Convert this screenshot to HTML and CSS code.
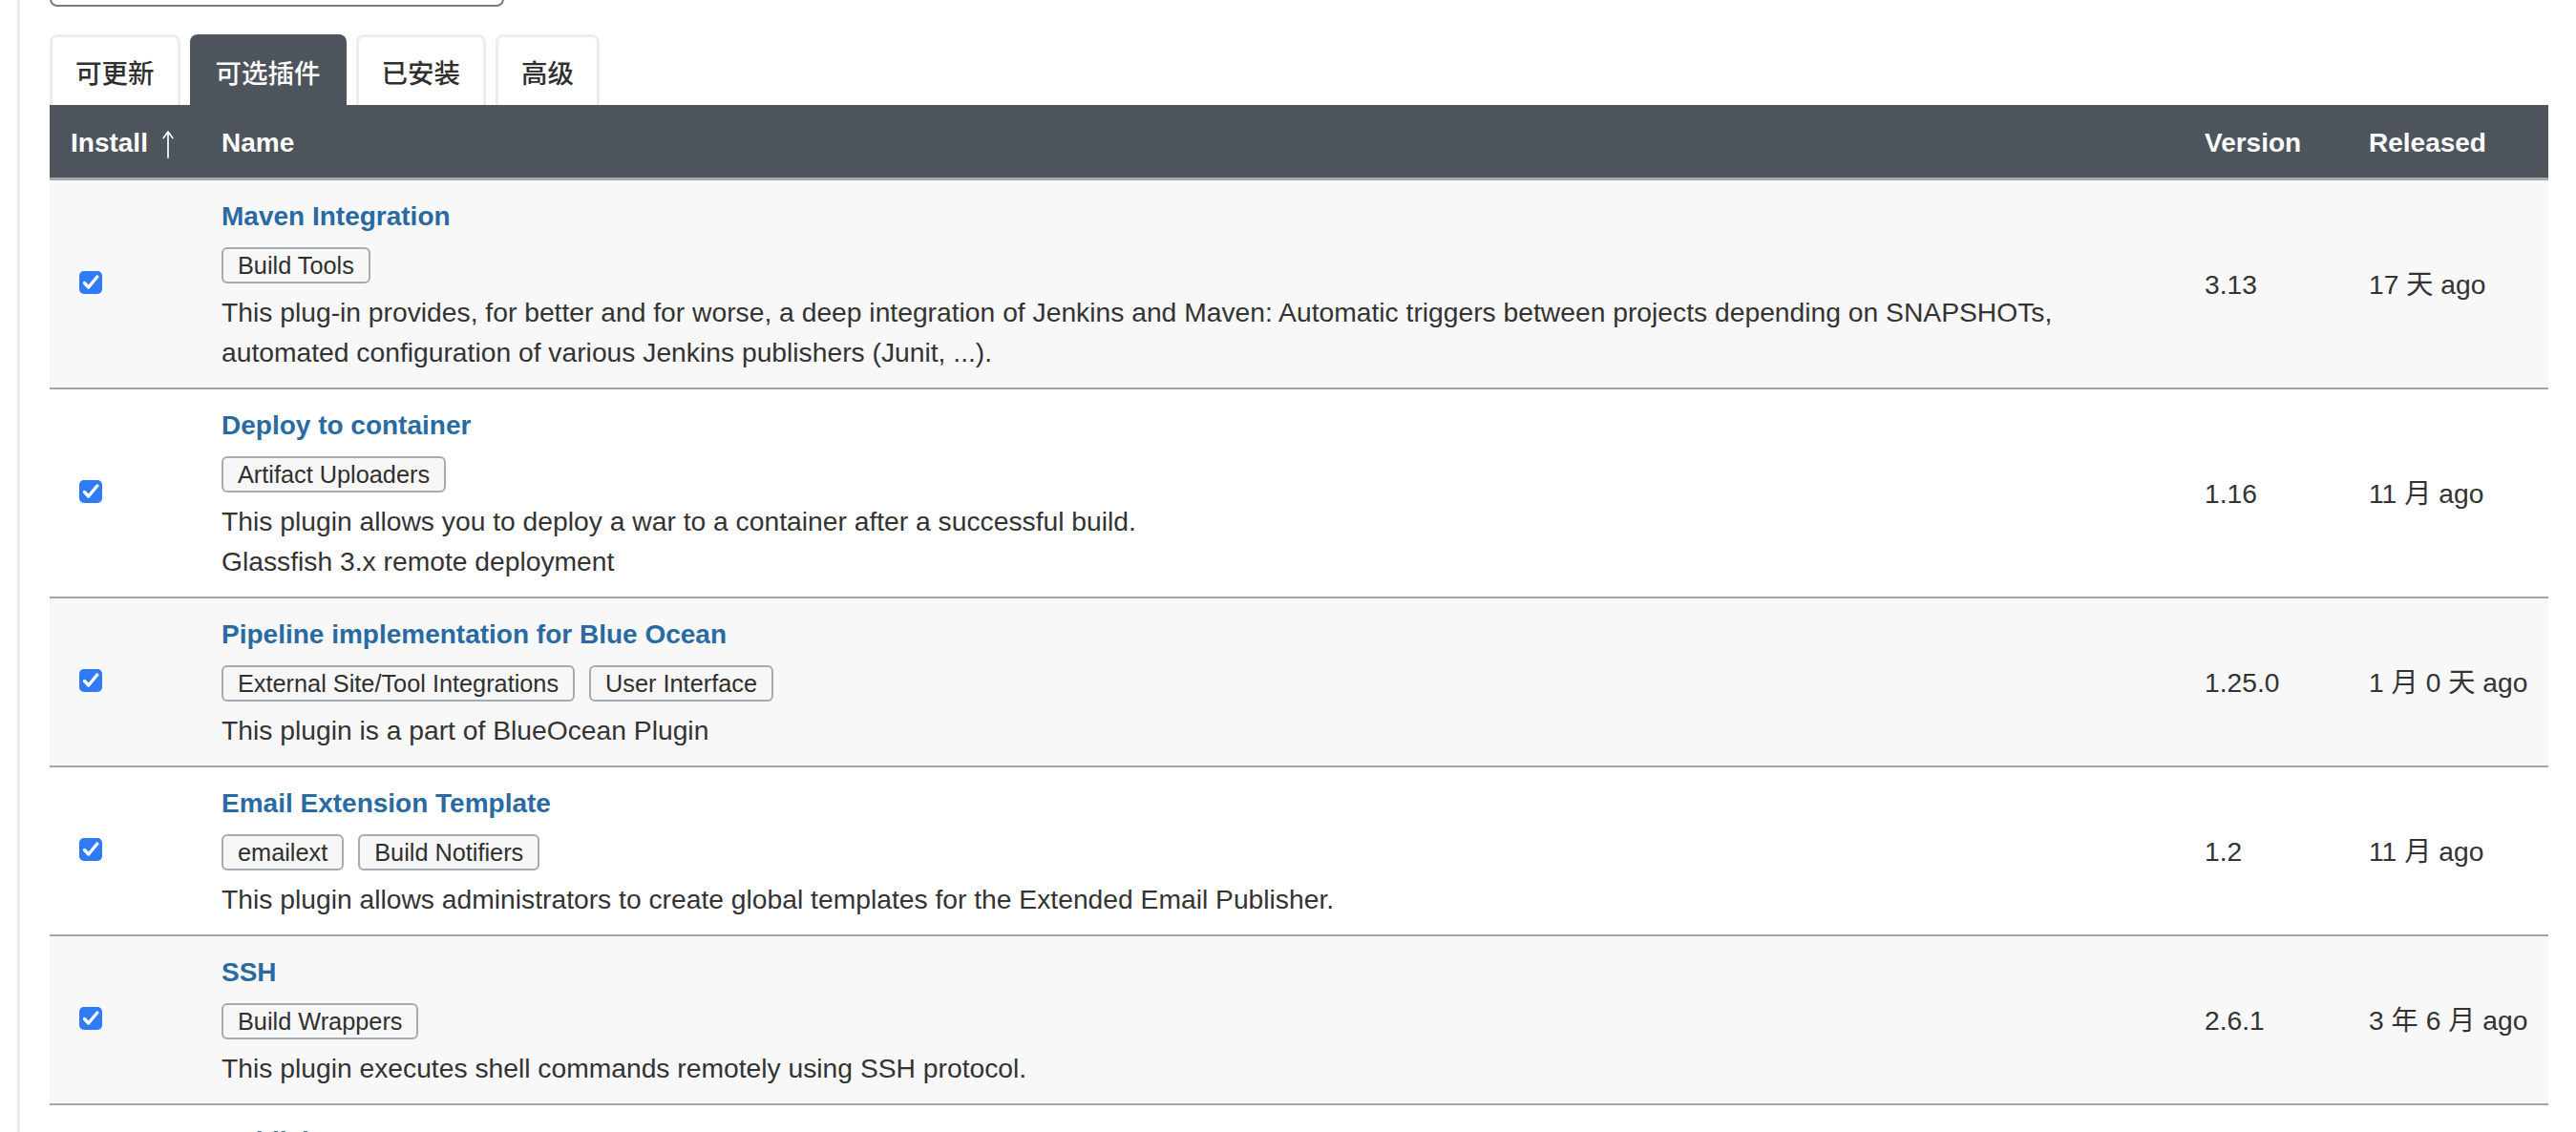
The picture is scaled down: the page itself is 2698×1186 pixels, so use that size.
FILE: index.html
```html
<!DOCTYPE html>
<html lang="zh-CN">
<head>
<meta charset="utf-8">
<title>插件管理</title>
<link rel="stylesheet" href="styles.css">
</head>
<body>
<div class="page">
  <div class="rail"></div>
  <main class="main">
    <div class="search"></div>
    <nav class="tabs">
      <a class="tab">可更新</a>
      <a class="tab active">可选插件</a>
      <a class="tab">已安装</a>
      <a class="tab">高级</a>
    </nav>
    <table class="plugins">
      <colgroup>
        <col class="c-install">
        <col class="c-name">
        <col class="c-version">
        <col class="c-released">
      </colgroup>
      <thead>
        <tr>
          <th>Install<svg class="arrow" viewBox="0 0 12 30"><path d="M6 29V2M1.2 8.5L6 2l4.8 6.5"/></svg></th>
          <th>Name</th>
          <th>Version</th>
          <th>Released</th>
        </tr>
      </thead>
      <tbody>
        <tr class="shade">
          <td class="cb"><span class="check"><svg viewBox="0 0 24 24"><path d="M5.5 12.5l4.2 4.5L18.8 6"/></svg></span></td>
          <td class="info">
            <a class="name">Maven Integration</a>
            <div class="tags"><span class="tag">Build Tools</span></div>
            <div class="desc">This plug-in provides, for better and for worse, a deep integration of Jenkins and Maven: Automatic triggers between projects depending on SNAPSHOTs, automated configuration of various Jenkins publishers (Junit, ...).</div>
          </td>
          <td class="meta">3.13</td>
          <td class="meta">17 天 ago</td>
        </tr>
        <tr>
          <td class="cb"><span class="check"><svg viewBox="0 0 24 24"><path d="M5.5 12.5l4.2 4.5L18.8 6"/></svg></span></td>
          <td class="info">
            <a class="name">Deploy to container</a>
            <div class="tags"><span class="tag">Artifact Uploaders</span></div>
            <div class="desc">This plugin allows you to deploy a war to a container after a successful build.<br>Glassfish 3.x remote deployment</div>
          </td>
          <td class="meta">1.16</td>
          <td class="meta">11 月 ago</td>
        </tr>
        <tr class="shade">
          <td class="cb"><span class="check"><svg viewBox="0 0 24 24"><path d="M5.5 12.5l4.2 4.5L18.8 6"/></svg></span></td>
          <td class="info">
            <a class="name">Pipeline implementation for Blue Ocean</a>
            <div class="tags"><span class="tag">External Site/Tool Integrations</span><span class="tag">User Interface</span></div>
            <div class="desc">This plugin is a part of BlueOcean Plugin</div>
          </td>
          <td class="meta">1.25.0</td>
          <td class="meta">1 月 0 天 ago</td>
        </tr>
        <tr>
          <td class="cb"><span class="check"><svg viewBox="0 0 24 24"><path d="M5.5 12.5l4.2 4.5L18.8 6"/></svg></span></td>
          <td class="info">
            <a class="name">Email Extension Template</a>
            <div class="tags"><span class="tag">emailext</span><span class="tag">Build Notifiers</span></div>
            <div class="desc">This plugin allows administrators to create global templates for the Extended Email Publisher.</div>
          </td>
          <td class="meta">1.2</td>
          <td class="meta">11 月 ago</td>
        </tr>
        <tr class="shade">
          <td class="cb"><span class="check"><svg viewBox="0 0 24 24"><path d="M5.5 12.5l4.2 4.5L18.8 6"/></svg></span></td>
          <td class="info">
            <a class="name">SSH</a>
            <div class="tags"><span class="tag">Build Wrappers</span></div>
            <div class="desc">This plugin executes shell commands remotely using SSH protocol.</div>
          </td>
          <td class="meta">2.6.1</td>
          <td class="meta">3 年 6 月 ago</td>
        </tr>
        <tr>
          <td class="cb"><span class="check"><svg viewBox="0 0 24 24"><path d="M5.5 12.5l4.2 4.5L18.8 6"/></svg></span></td>
          <td class="info">
            <a class="name">Publish Over SSH</a>
            <div class="tags"><span class="tag">Artifact Uploaders</span></div>
            <div class="desc">Send build artifacts over SSH</div>
          </td>
          <td class="meta">1.22</td>
          <td class="meta">1 年 2 月 ago</td>
        </tr>
      </tbody>
    </table>
  </main>
</div>
</body>
</html>
```

FILE: styles.css
```css
* {
  box-sizing: border-box;
}

html, body {
  margin: 0;
  height: 1186px;
  overflow: hidden;
}

body {
  font-family: "Liberation Sans", Arial, "Noto Sans CJK SC", sans-serif;
  color: #333;
  background: #fff;
}

.page {
  display: flex;
  min-height: 1186px;
}

.rail {
  flex: none;
  width: 21px;
  border-right: 3px solid #e8ecf0;
}

.main {
  flex: 1;
  padding: 0 29px 0 31px;
}

.search {
  width: 476px;
  height: 40px;
  margin-top: -33px;
  border: 2px solid #7a7a7a;
  border-radius: 8px;
}

.tabs {
  display: flex;
  gap: 10px;
  margin-top: 29px;
}

.tab {
  display: flex;
  align-items: center;
  height: 74px;
  padding: 0 24px;
  font-family: "Noto Sans CJK SC", sans-serif;
  font-size: 27.5px;
  font-weight: 500;
  color: #2f2f2f;
  background: #fff;
  border: 3px solid #eaeef2;
  border-bottom: none;
  border-radius: 8px 8px 0 0;
}

.tab.active {
  color: #fff;
  background: #4e545c;
  border-color: #4e545c;
}

.plugins {
  width: 100%;
  table-layout: fixed;
  border-collapse: separate;
  border-spacing: 0;
}

.c-install { width: 158px; }
.c-version { width: 172px; }
.c-released { width: 210px; }

.plugins th {
  height: 79px;
  padding: 4px 22px 0;
  text-align: left;
  vertical-align: middle;
  font-size: 28px;
  font-weight: bold;
  color: #fff;
  background: #4e545c;
  border-bottom: 3px solid #a1aab1;
}

.plugins th .arrow {
  width: 12px;
  height: 30px;
  margin-left: 15px;
  vertical-align: -7px;
}

.arrow path {
  fill: none;
  stroke: #fff;
  stroke-width: 1.7;
  stroke-linecap: round;
  stroke-linejoin: round;
}

.plugins td {
  padding: 0 22px;
  vertical-align: middle;
  font-size: 28.25px;
  line-height: 42px;
  border-bottom: 2px solid #9ea7af;
}

.plugins tr.shade td {
  background: #f8f8f8;
}

.plugins td.cb {
  padding-left: 31px;
}

.check {
  display: block;
  width: 24px;
  height: 24px;
  margin-top: -3px;
  border-radius: 5px;
  background: #2f7af6;
}

.check svg {
  display: block;
  width: 24px;
  height: 24px;
}

.check path {
  fill: none;
  stroke: #fff;
  stroke-width: 3.4;
  stroke-linecap: round;
  stroke-linejoin: round;
}

.plugins td.info {
  padding: 17px 22px 16px;
}

.name {
  display: block;
  font-size: 28px;
  font-weight: bold;
  line-height: 42px;
  color: #2a6aa2;
  text-decoration: none;
}

.tags {
  display: flex;
  gap: 15px;
  margin-top: 11px;
}

.tag {
  height: 38px;
  padding: 0 15px;
  font-size: 25.3px;
  line-height: 34px;
  color: #2f2f2f;
  background: #f7f7f7;
  border: 2px solid #a4acb3;
  border-radius: 6px;
}

.desc {
  margin-top: 9px;
}

.meta {
  color: #333;
  white-space: nowrap;
}
```
